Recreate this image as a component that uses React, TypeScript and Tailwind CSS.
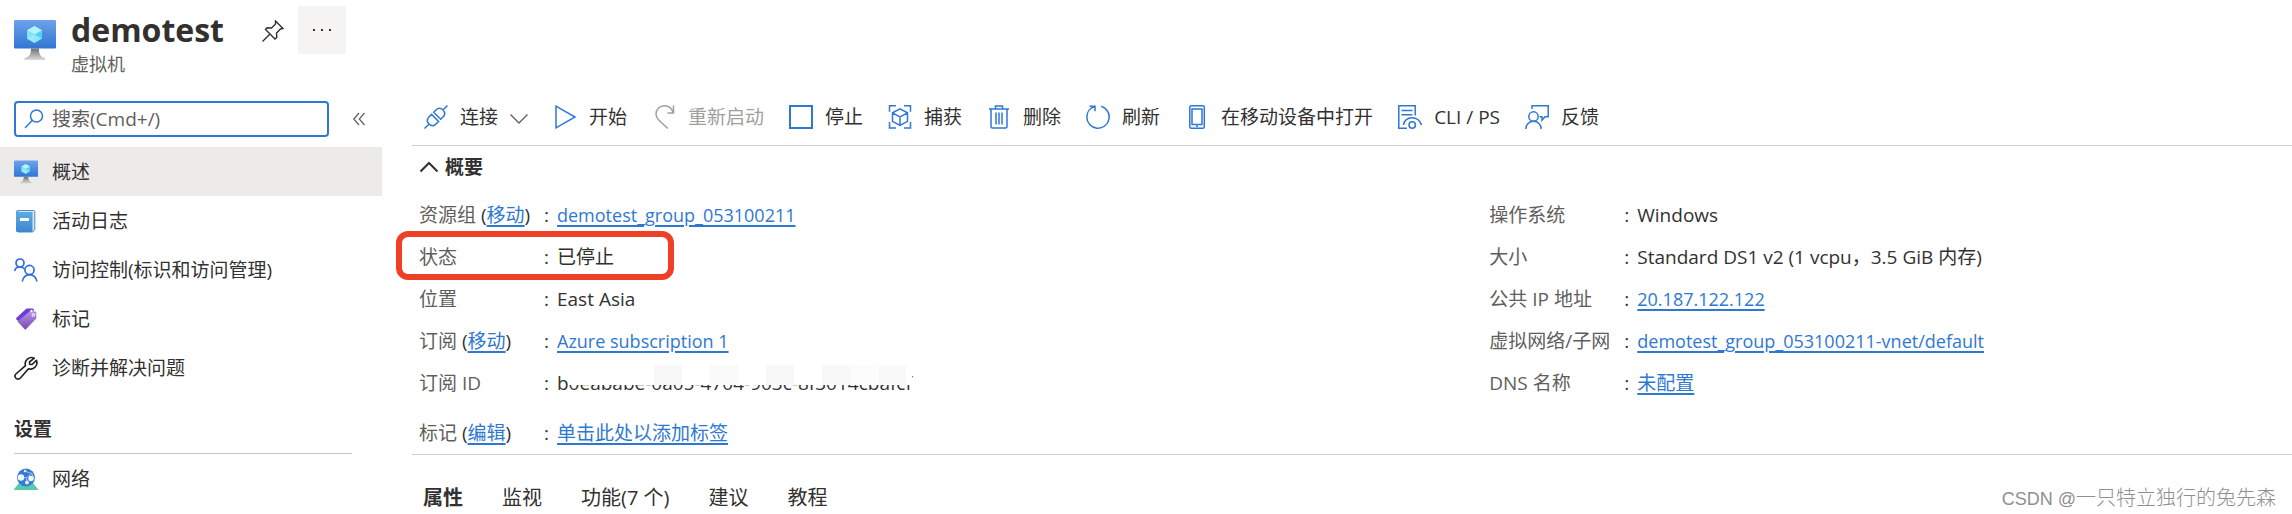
import React from 'react';
import type { ReactNode } from 'react';

type IconProps = { className?: string };

const VmIcon = ({ className }: IconProps) => (
    <svg viewBox="0 0 42 40" className={className} aria-hidden="true">
        <defs>
            <linearGradient id="vm-screen" x1="0" y1="0" x2="0" y2="1">
                <stop offset="0" stopColor="#6ea2ec" />
                <stop offset="1" stopColor="#2f76d2" />
            </linearGradient>
            <linearGradient id="vm-stand" x1="0" y1="0" x2="0" y2="1">
                <stop offset="0" stopColor="#707070" />
                <stop offset="1" stopColor="#dcdcdc" />
            </linearGradient>
        </defs>
        <rect width="42" height="28.5" rx="1.2" fill="url(#vm-screen)" />
        <path d="M17 28.5h8c0 5 1 8.500 6 9.500v2H10.500v-2c5.500-1 6.500-4.500 6.500-9.500z" fill="url(#vm-stand)" />
        <path d="M20.500 6l7.500 4.200v8.400l-7.500 4.300-7.500-4.300v-8.400z" fill="#50d3f5" />
        <path d="M20.500 6l7.500 4.200-7.500 4.400-7.500-4.400z" fill="#b5f3fc" />
        <path d="M13 10.200l7.500 4.400v8.300l-7.500-4.300z" fill="#84e2fa" />
        <path d="M13 18.600l7.500-4 7.500 4-7.500 4.300z" fill="#a5ecfc" opacity=".7" />
    </svg>
);

const LogIcon = () => (
    <svg viewBox="0 0 24 24" className="size-6" aria-hidden="true">
        <defs>
            <linearGradient id="log-book" x1="0" y1="0" x2="0" y2="1">
                <stop offset="0" stopColor="#5faee4" />
                <stop offset="1" stopColor="#3e86d3" />
            </linearGradient>
        </defs>
        <path d="M4 1.500h15.500a1.300 1.300 0 0 1 1.300 1.300v17.700l-2 2.500H4z" fill="#d7e6f3" stroke="#4a8cc4" strokeWidth="1" />
        <path d="M3.500 1.200h1.300L3.800 3h14.700v19a1 1 0 0 1-1 1H3.500A1.500 1.500 0 0 1 2 21.500v-19a1.400 1.400 0 0 1 1.500-1.300z" fill="url(#log-book)" />
        <rect x="6" y="9" width="9" height="3" rx=".6" fill="#fff" />
    </svg>
);

const PeopleIcon = () => (
    <svg viewBox="0 0 24 24" className="size-6" fill="none" stroke="#2f6ee0" strokeWidth="1.700" aria-hidden="true">
        <circle cx="6" cy="5" r="4" />
        <path d="M.800 13c.300-2.500 2.500-4 5.200-4 1.800 0 3.200.600 4.300 1.800" />
        <circle cx="15.500" cy="12" r="4.600" />
        <path d="M8.300 23.500c.400-4 3.500-6.800 7.300-6.800s6.900 2.800 7.300 6.800" />
    </svg>
);

const TagIcon = () => (
    <svg viewBox="0 0 24 24" className="size-6" aria-hidden="true">
        <defs>
            <linearGradient id="tag-front" x1="0" y1="0" x2="0" y2="1">
                <stop offset="0" stopColor="#b695e4" />
                <stop offset="1" stopColor="#7548b4" />
            </linearGradient>
        </defs>
        <path d="M12.500 1.500h6.300l1 1L19 9 6 15.500l-3.500-3c-.600-.600-.600-1.200 0-1.800z" fill="#6b3fd0" />
        <path d="M15.500 4.500h6c.500 0 .800.300.800.800v6.200L12 22.300c-.400.400-.900.400-1.300 0L3.500 14.500z" fill="url(#tag-front)" />
        <circle cx="17.500" cy="4" r="1.200" fill="#fff" />
        <circle cx="19.300" cy="8" r="1.700" fill="#fff" />
        <circle cx="19.300" cy="8" r=".7" fill="#8e68c8" />
    </svg>
);

const WrenchIcon = () => (
    <svg viewBox="0 0 24 24" className="size-6" fill="none" stroke="#1f1f1f" strokeWidth="1.600" strokeLinejoin="round" aria-hidden="true">
        <path d="M20.300 2.200a6.300 6.300 0 0 0-8.800 7.500L1.900 18a3 3 0 0 0 4.300 4.200l8.300-9.500a6.300 6.300 0 0 0 7.900-8.400L18 8.500l-2.400-.200L15.500 6z" />
    </svg>
);

const NetworkIcon = () => (
    <svg viewBox="0 0 24 24" className="size-6" aria-hidden="true">
        <path d="M5 16h14l5 6.200v.800H0v-.800z" fill="#59c9ae" />
        <circle cx="12" cy="10.500" r="9" fill="#3579d3" />
        <path d="M5 9l7 2 6-4.500M12 11l2 6M10 4l8 2.500M18 6.500l2 5" stroke="#9cc3f3" strokeWidth="1" fill="none" />
        <circle cx="7" cy="10.500" r="3.200" fill="#f4f6fa" />
        <circle cx="17" cy="11.500" r="2.700" fill="#f4f6fa" />
        <circle cx="11" cy="4" r="1.300" fill="#dfeafa" />
        <circle cx="13" cy="15.500" r="2" fill="#dfeafa" />
    </svg>
);

// Outline icon used in the command bar
const Stroke = ({ children, className = 'size-6 text-[#2f78d2]' }: { children: ReactNode; className?: string }) => (
    <svg viewBox="0 0 24 24" className={className} fill="none" stroke="currentColor" strokeWidth="1.500" aria-hidden="true">
        {children}
    </svg>
);

const commands = [
    {
        label: '连接',
        menu: true,
        icon: (
            <Stroke>
                <path d="M.500 23.500l4.300-4.300M19 5l4.500-4.500M5 19c-2.500-2.600-2-5 0-7l2.600-2.600 7 7L12 19c-2 2-4.500 2.500-7 0zM9.700 7.300L12 5c2-2 4.500-2.500 7 0 2.500 2.600 2 5 0 7l-2.300 2.300z" />
            </Stroke>
        ),
    },
    { label: '开始', icon: <Stroke><path d="M3 1.200L22 12 3 22.800z" /></Stroke> },
    {
        label: '重新启动',
        disabled: true,
        icon: (
            <Stroke className="size-6 text-[#a19f9d]">
                <path d="M15.500 8h6V.500M21.300 8C20 3.500 16.500.800 12.500.800 7.500.800 4 4.500 4 9c0 2.500 1 4.300 2.500 5.800l9.300 8.700" />
            </Stroke>
        ),
    },
    { label: '停止', icon: <Stroke><path d="M1 1h22v22H1z" strokeWidth="2" /></Stroke> },
    {
        label: '捕获',
        icon: (
            <Stroke>
                <path d="M8 .800H1.500v6M16 .800h6.500v6M1.500 17v6H8M22.500 17v6H16M12 3.800l7.500 4v8.500L12 20.500l-7.500-4.200V7.800zM4.500 7.800l7.500 4 7.500-4M12 11.800v8.700" />
            </Stroke>
        ),
    },
    {
        label: '删除',
        icon: (
            <Stroke>
                <path d="M2 4h20M8.500 4V1h7v3M4 4v17.500c0 1 .500 1.500 1.500 1.500h13c1 0 1.500-.500 1.500-1.500V4M9 7.500v12M12 7.500v12M15 7.500v12" />
            </Stroke>
        ),
    },
    { label: '刷新', icon: <Stroke><path d="M3.500 1.200h5.500v5M9 1.500C4 2.800.800 7 .800 12a11.200 11.200 0 1 0 14.400-10.700" /></Stroke> },
    {
        label: '在移动设备中打开',
        icon: (
            <Stroke>
                <rect x="4.800" y=".800" width="14.500" height="22.400" rx="1.500" />
                <path d="M7 4h10v15.500H7z" />
                <path d="M11 21.300h2" />
            </Stroke>
        ),
    },
    {
        label: 'CLI / PS',
        icon: (
            <Stroke>
                <path d="M9 23.200H.800V.800h16.400v9.700M3.500 5.500h11M3.500 9.800h11M5.500 20c.500-4.500 4.300-7.300 8.500-7.300 4.500 0 8.500 3 9.500 7.300" />
                <circle cx="14.200" cy="20" r="3.200" />
            </Stroke>
        ),
    },
    {
        label: '反馈',
        icon: (
            <Stroke>
                <path d="M7 4V.800h16.200v11H20l-3 3.500v-3.500h-2.500" />
                <circle cx="8.500" cy="11.500" r="4.700" />
                <path d="M.800 24c0-4.500 3.300-7.800 7.700-7.800s7.700 3.300 7.700 7.800" />
            </Stroke>
        ),
    },
];

const menu = [
    { label: '概述', icon: <VmIcon className="h-6 w-6" />, active: true },
    { label: '活动日志', icon: <LogIcon /> },
    { label: '访问控制(标识和访问管理)', icon: <PeopleIcon /> },
    { label: '标记', icon: <TagIcon /> },
    { label: '诊断并解决问题', icon: <WrenchIcon /> },
];

const tabs = ['属性', '监视', '功能(7 个)', '建议', '教程'];

const Link = ({ children }: { children: ReactNode }) => (
    <a href="#" className="text-[#2f78d2] underline decoration-2 underline-offset-3">
        {children}
    </a>
);

const MenuItem = ({ label, icon, active }: { label: string; icon: ReactNode; active?: boolean }) => (
    <a href="#" className={`flex h-[49px] items-center gap-3.5 px-3.5 ${active ? 'bg-[#edebe9]' : ''}`}>
        {icon}
        <span>{label}</span>
    </a>
);

type FieldProps = { label: string; action?: string; wide?: boolean; highlight?: boolean; children: ReactNode };

const Field = ({ label, action, wide, highlight, children }: FieldProps) => (
    <div className="relative flex h-[42px] items-center whitespace-nowrap">
        <dt className={`shrink-0 text-[#605e5c] ${wide ? 'w-[135px]' : 'w-[125px]'}`}>
            {label}
            {action && (
                <span className="text-[#323130]">
                    {' '}
                    (<Link>{action}</Link>)
                </span>
            )}
        </dt>
        <span className="w-[13px] shrink-0">:</span>
        <dd>{children}</dd>
        {highlight && (
            <div className="absolute -top-[5px] -bottom-0.5 -left-[23px] w-[278px] rounded-xl border-6 border-[#ee4026]"></div>
        )}
    </div>
);

export default function App() {
    return (
        <div className="min-h-screen bg-white font-['Open_Sans','Noto_Sans_CJK_SC',sans-serif] text-[19px] leading-7 text-[#323130]">
            {/* Resource title */}
            <header className="flex items-start px-3.5 pt-2 pb-[13px]">
                <VmIcon className="mt-3 mr-[15px] h-10 w-[42px]" />
                <div>
                    <h1 className="text-[32px] leading-11 font-bold">demotest</h1>
                    <p className="text-lg leading-6 text-[#605e5c]">虚拟机</p>
                </div>
                <button type="button" aria-label="固定" className="mt-3 ml-[38px]">
                    <svg viewBox="0 0 22 22" className="size-[22px]" fill="none" stroke="currentColor" strokeWidth="1.400" aria-hidden="true">
                        <path d="M.500 21.500l7-7M13.500 1l7.500 7.500-2.500.500-4 4 .300 4.500-1.800 1.500L3.500 9.500l1.500-1.800 4.500.300 4-4z" />
                    </svg>
                </button>
                <button type="button" aria-label="更多" className="-mt-0.5 ml-3.5 flex size-12 items-center justify-center gap-1.5 bg-[#f5f4f2]">
                    <i className="size-0.5 bg-[#323130]"></i>
                    <i className="size-0.5 bg-[#323130]"></i>
                    <i className="size-0.5 bg-[#323130]"></i>
                </button>
            </header>

            <div className="flex">
                {/* Sidebar */}
                <nav className="w-[382px] shrink-0 pt-3">
                    <div className="mb-2.5 flex items-center gap-6 px-3.5">
                        <label className="flex h-9 w-[315px] items-center rounded-sm border-2 border-[#2f78d2] pl-2">
                            <svg viewBox="0 0 20 20" className="mr-2 size-5 shrink-0" fill="none" stroke="#2f78d2" strokeWidth="1.500" aria-hidden="true">
                                <circle cx="12.500" cy="7" r="6" />
                                <path d="M8.300 11.300L1 19" />
                            </svg>
                            <input type="text" aria-label="搜索" placeholder="搜索(Cmd+/)" className="w-full outline-none placeholder:text-[#605e5c]" />
                        </label>
                        <button type="button" aria-label="折叠">
                            <svg viewBox="0 0 12 14" className="h-3.5 w-3" fill="none" stroke="#605e5c" strokeWidth="1.200" aria-hidden="true">
                                <path d="M6 1L.800 7 6 13M11.500 1L6.300 7l5.200 6" />
                            </svg>
                        </button>
                    </div>
                    {menu.map((item) => (
                        <MenuItem key={item.label} {...item} />
                    ))}
                    <h2 className="mr-[30px] ml-3.5 border-b border-[#c8c6c4] pt-[23px] pb-2.5 font-bold">设置</h2>
                    <MenuItem label="网络" icon={<NetworkIcon />} />
                </nav>

                <main className="ml-[30px] min-w-0 grow">
                    {/* Command bar */}
                    <div className="flex h-[57px] items-center gap-[25px] border-b border-[#d2d0ce] pl-3 whitespace-nowrap">
                        {commands.map(({ label, icon, menu: hasMenu, disabled }) => (
                            <button key={label} type="button" disabled={disabled} className="flex items-center gap-3 disabled:text-[#a19f9d]">
                                {icon}
                                {label}
                                {hasMenu && (
                                    <svg viewBox="0 0 18 10" className="mt-1 h-2.5 w-[18px]" fill="none" stroke="#605e5c" strokeWidth="1.300" aria-hidden="true">
                                        <path d="M.500.500L9 9 17.500.500" />
                                    </svg>
                                )}
                            </button>
                        ))}
                    </div>

                    {/* Essentials */}
                    <section className="border-b border-[#d2d0ce] pl-[7px]">
                        <button type="button" className="mt-[7px] mb-[13px] flex items-center gap-1.5 font-bold">
                            <svg viewBox="0 0 20 12" className="h-3 w-5" fill="none" stroke="currentColor" strokeWidth="2" aria-hidden="true">
                                <path d="M1.500 10.500L10 2l8.500 8.500" />
                            </svg>
                            概要
                        </button>
                        <div className="grid grid-cols-[4fr_3fr]">
                            <dl>
                                <Field label="资源组" action="移动">
                                    <span className="text-lg"><Link>demotest_group_053100211</Link></span>
                                </Field>
                                <Field label="状态" highlight>已停止</Field>
                                <Field label="位置">East Asia</Field>
                                <Field label="订阅" action="移动">
                                    <span className="text-lg"><Link>Azure subscription 1</Link></span>
                                </Field>
                                <Field label="订阅 ID">
                                    <span className="relative block">
                                        b0eababe-0a05-4704-903c-8f3014cbafcf
                                        {/* Redaction over the upper half of the id */}
                                        <span className="absolute -top-1 right-0 left-3 flex h-5 justify-end bg-white pr-1.5">
                                            <i className="mr-7 w-7 bg-[#f8f8f8]"></i>
                                            <i className="mr-7 w-7 bg-[#fafafa]"></i>
                                            <i className="mr-7 w-7 bg-[#f8f8f8]"></i>
                                            <i className="w-7 bg-[#f8f8f8]"></i>
                                            <i className="w-7 bg-[#fcfcfc]"></i>
                                            <i className="w-7 bg-[#f9f9f9]"></i>
                                        </span>
                                    </span>
                                </Field>
                            </dl>
                            <dl>
                                <Field label="操作系统" wide>Windows</Field>
                                <Field label="大小" wide>Standard DS1 v2 (1 vcpu，3.5 GiB 内存)</Field>
                                <Field label="公共 IP 地址" wide>
                                    <span className="text-lg"><Link>20.187.122.122</Link></span>
                                </Field>
                                <Field label="虚拟网络/子网" wide>
                                    <span className="text-lg"><Link>demotest_group_053100211-vnet/default</Link></span>
                                </Field>
                                <Field label="DNS 名称" wide><Link>未配置</Link></Field>
                            </dl>
                        </div>
                        <dl className="mt-2">
                            <Field label="标记" action="编辑"><Link>单击此处以添加标签</Link></Field>
                        </dl>
                    </section>

                    <div className="flex items-center justify-between pt-7 pr-4 pl-[11px] text-xl leading-7">
                        <div role="tablist" className="flex gap-[39px]">
                            {tabs.map((tab, i) => (
                                <button key={tab} type="button" role="tab" aria-selected={i === 0} className="aria-selected:font-bold">
                                    {tab}
                                </button>
                            ))}
                        </div>
                        <span className="font-['Noto_Sans_CJK_SC',sans-serif] font-light text-[#8f8f8f]">
                            <span className="font-['Liberation_Sans',sans-serif] text-lg">CSDN @</span>一只特立独行的兔先森
                        </span>
                    </div>
                </main>
            </div>
        </div>
    );
}
